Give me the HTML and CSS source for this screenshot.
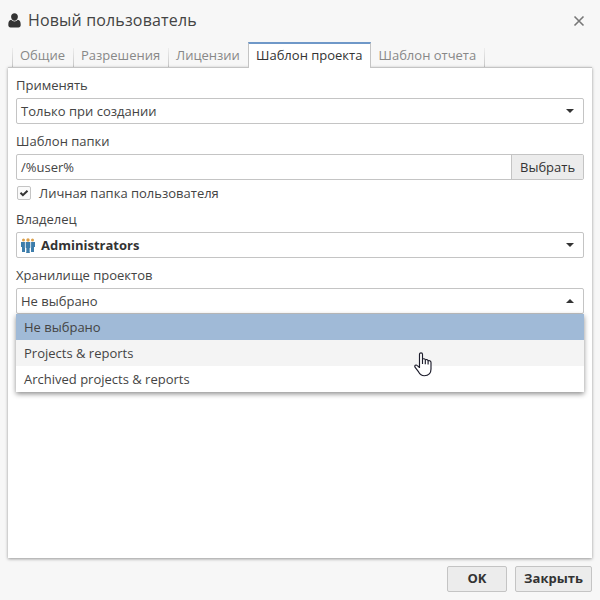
FILE: index.html
```html
<!DOCTYPE html>
<html lang="ru">
<head>
<meta charset="utf-8">
<title>Новый пользователь</title>
<link rel="stylesheet" href="styles.css">
</head>
<body>
<div class="dialog">
  <header class="titlebar">
    <svg class="user" width="13" height="15" viewBox="0 0 13 15"><path fill="#333" d="M6.500 0.300c2 0 3.400 1.500 3.400 3.500S8.400 7.800 6.500 7.800 3.100 5.800 3.100 3.800 4.500.3 6.500.3zM3.300 6.800c.9 1 2 1.600 3.200 1.600s2.300-.6 3.200-1.600c2.200.2 3 2 3 5.200 0 1.500-.9 2.400-2.200 2.400h-8c-1.300 0-2.200-.9-2.200-2.400 0-3.200.8-5 3-5.200z"/></svg>
    <h1 class="title">Новый пользователь</h1>
    <svg class="close" width="12" height="12" viewBox="0 0 12 12"><path d="M1.500 1.500l9 9M10.500 1.500l-9 9" stroke="#777" stroke-width="1.600" fill="none"/></svg>
  </header>
  <nav class="tabs">
    <div class="tab w1"><span>Общие</span></div>
    <div class="tab w2"><span>Разрешения</span></div>
    <div class="tab w3"><span>Лицензии</span></div>
    <div class="tab active"><span>Шаблон проекта</span></div>
    <div class="tab w5"><span>Шаблон отчета</span></div>
    <div class="tab end"></div>
  </nav>
  <main class="panel">
    <div class="label"><span>Применять</span></div>
    <div class="field"><span class="value">Только при создании</span><i class="arrow"></i></div>
    <div class="label"><span>Шаблон папки</span></div>
    <div class="field"><span class="value">/%user%</span><span class="browse"><span>Выбрать</span></span></div>
    <div class="check">
      <span class="box"><svg width="12" height="12" viewBox="0 0 12 12"><path d="M2.500 5.800l2.400 2.400 4.600-4.500" stroke="#333" stroke-width="2" fill="none"/></svg></span>
      <span>Личная папка пользователя</span>
    </div>
    <div class="label"><span>Владелец</span></div>
    <div class="field owner">
      <svg class="group" width="14" height="15" viewBox="0 0 14 15">
        <g fill="#dca04b"><circle cx="2.500" cy="2" r="1.500"/><circle cx="11.500" cy="2" r="1.500"/><circle cx="7" cy="2" r="1.700"/></g>
        <g fill="#3d7dab"><path d="M0 4h4v10H1V9H0zM14 4h-4v10h3V9h1z"/><path d="M4.500 4h5v6H8.800v5H5.200v-5h-.7z"/></g>
        <path d="M4.300 4v6h.6v4M9.700 4v6h-.6v4" stroke="#fff" stroke-width=".5" fill="none"/>
      </svg>
      <b class="value">Administrators</b><i class="arrow"></i>
    </div>
    <div class="label"><span>Хранилище проектов</span></div>
    <div class="field"><span class="value">Не выбрано</span><i class="arrow up"></i>
      <div class="menu">
        <div class="option selected"><span>Не выбрано</span></div>
        <div class="option hover"><span>Projects &amp; reports</span></div>
        <div class="option"><span>Archived projects &amp; reports</span></div>
        <svg class="cursor" width="19" height="25" viewBox="0 0 19 25"><path d="M5.500 15.500V2.300c0-2 3-2 3 0v5c.4-.9 2.700-.8 2.800.7.600-.8 2.700-.5 2.800.9.600-.6 2.900-.4 2.900 1.600v6.500c0 4-2.500 6.700-6.700 6.700-3 0-4.500-1.500-5.700-3.800L1 15.200c-.8-1.600.9-2.900 2.300-1.600zM8.500 7v5M11.300 8v4.200M14.100 9v3.500" fill="#fff" stroke="#1c1c2b" stroke-width="1.150" stroke-linejoin="round"/></svg>
      </div>
    </div>
  </main>
  <footer class="footer">
    <div class="btn ok"><span>OK</span></div>
    <div class="btn cancel"><span>Закрыть</span></div>
  </footer>
</div>
</body>
</html>
```
FILE: styles.css
```css
* { box-sizing: border-box; }
body { margin: 0; background: #f7f7f7; font: 13px/18px "Open Sans", "Noto Sans", sans-serif; color: #444; }
.dialog { width: 600px; height: 600px; padding: 0 8px 8px; display: flex; flex-direction: column; background: #f7f7f7; }
.titlebar { height: 42px; display: flex; align-items: center; }
.user { margin-top: -1px; }
.title { flex: 1; margin: 0 0 2px 7px; font-size: 16px; letter-spacing: .16px; line-height: 24px; font-weight: 400; color: #444; white-space: nowrap; }
.close { margin-right: 7px; }
.tabs { height: 25px; display: flex; align-items: flex-end; padding-left: 4px; color: #888; white-space: nowrap; }
.tab { height: 19px; padding-left: 7px; border-left: 1px solid; border-image: linear-gradient(#f0f0f0, #c4c4c4) 1; }
.tab span { position: relative; top: -2px; }
.w1 { width: 61px; }
.w2 { width: 95px; }
.w3 { width: 80px; }
.tab.active { width: 123px; height: 26px; margin-bottom: -1px; border: 1px solid #c4c4c4; border-top: 2px solid #6f98c8; border-bottom: 0; border-image: none; background: #fff; color: #333; z-index: 1; padding-top: 4px; position: relative; }
.tab.w5 { width: 113px; border: 0; padding-left: 7.500px; }
.tab.end { width: 1px; padding: 0; }
.panel { height: 491px; padding: 0 8px; border-top: 1px solid #c4c4c4; background: #fff; box-shadow: 0 1px 3px rgba(0,0,0,.4); }
.label { height: 30px; padding-top: 8px; }
.field { position: relative; height: 26px; display: flex; align-items: center; padding-left: 4px; border: 1px solid #c4c4c4; border-radius: 2px; background: #fff; }
.value { flex: 1; }
.arrow { margin-right: 9px; border: 4px solid transparent; border-top-color: #333; border-bottom: 0; }
.arrow.up { border-top: 0; border-bottom: 4px solid #333; }
.browse { width: 72px; height: 24px; padding: 3px 0 0 8px; border-left: 1px solid #c4c4c4; background: #ececec; color: #333; }
.check { height: 22px; padding: 4px 0 0 1px; display: flex; align-items: center; gap: 8px; }
.box { width: 14px; height: 14px; border: 1px solid #c4c4c4; border-radius: 2px; background: #fafafa; display: flex; }
.group { margin-right: 6px; }
.owner { color: #333; }
.menu { position: absolute; z-index: 2; left: -1px; top: 25px; width: 568px; height: 78px; background: #fff; box-shadow: 0 2px 5px rgba(0,0,0,.45); }
.option { height: 26px; padding: 4px 8px; }
.option.selected { background: #a0bad7; }
.option.hover { background: #f4f4f4; }
.cursor { position: absolute; left: 398px; top: 38px; }
.footer { display: flex; justify-content: flex-end; gap: 8px; padding-top: 8px; }
.btn { height: 26px; padding-bottom: 2px; display: flex; align-items: center; justify-content: center; background: #ececec; border: 1px solid #c4c4c4; border-radius: 2px; font-weight: 700; color: #333; }
.ok { width: 60px; }
.cancel { width: 77px; }
```
